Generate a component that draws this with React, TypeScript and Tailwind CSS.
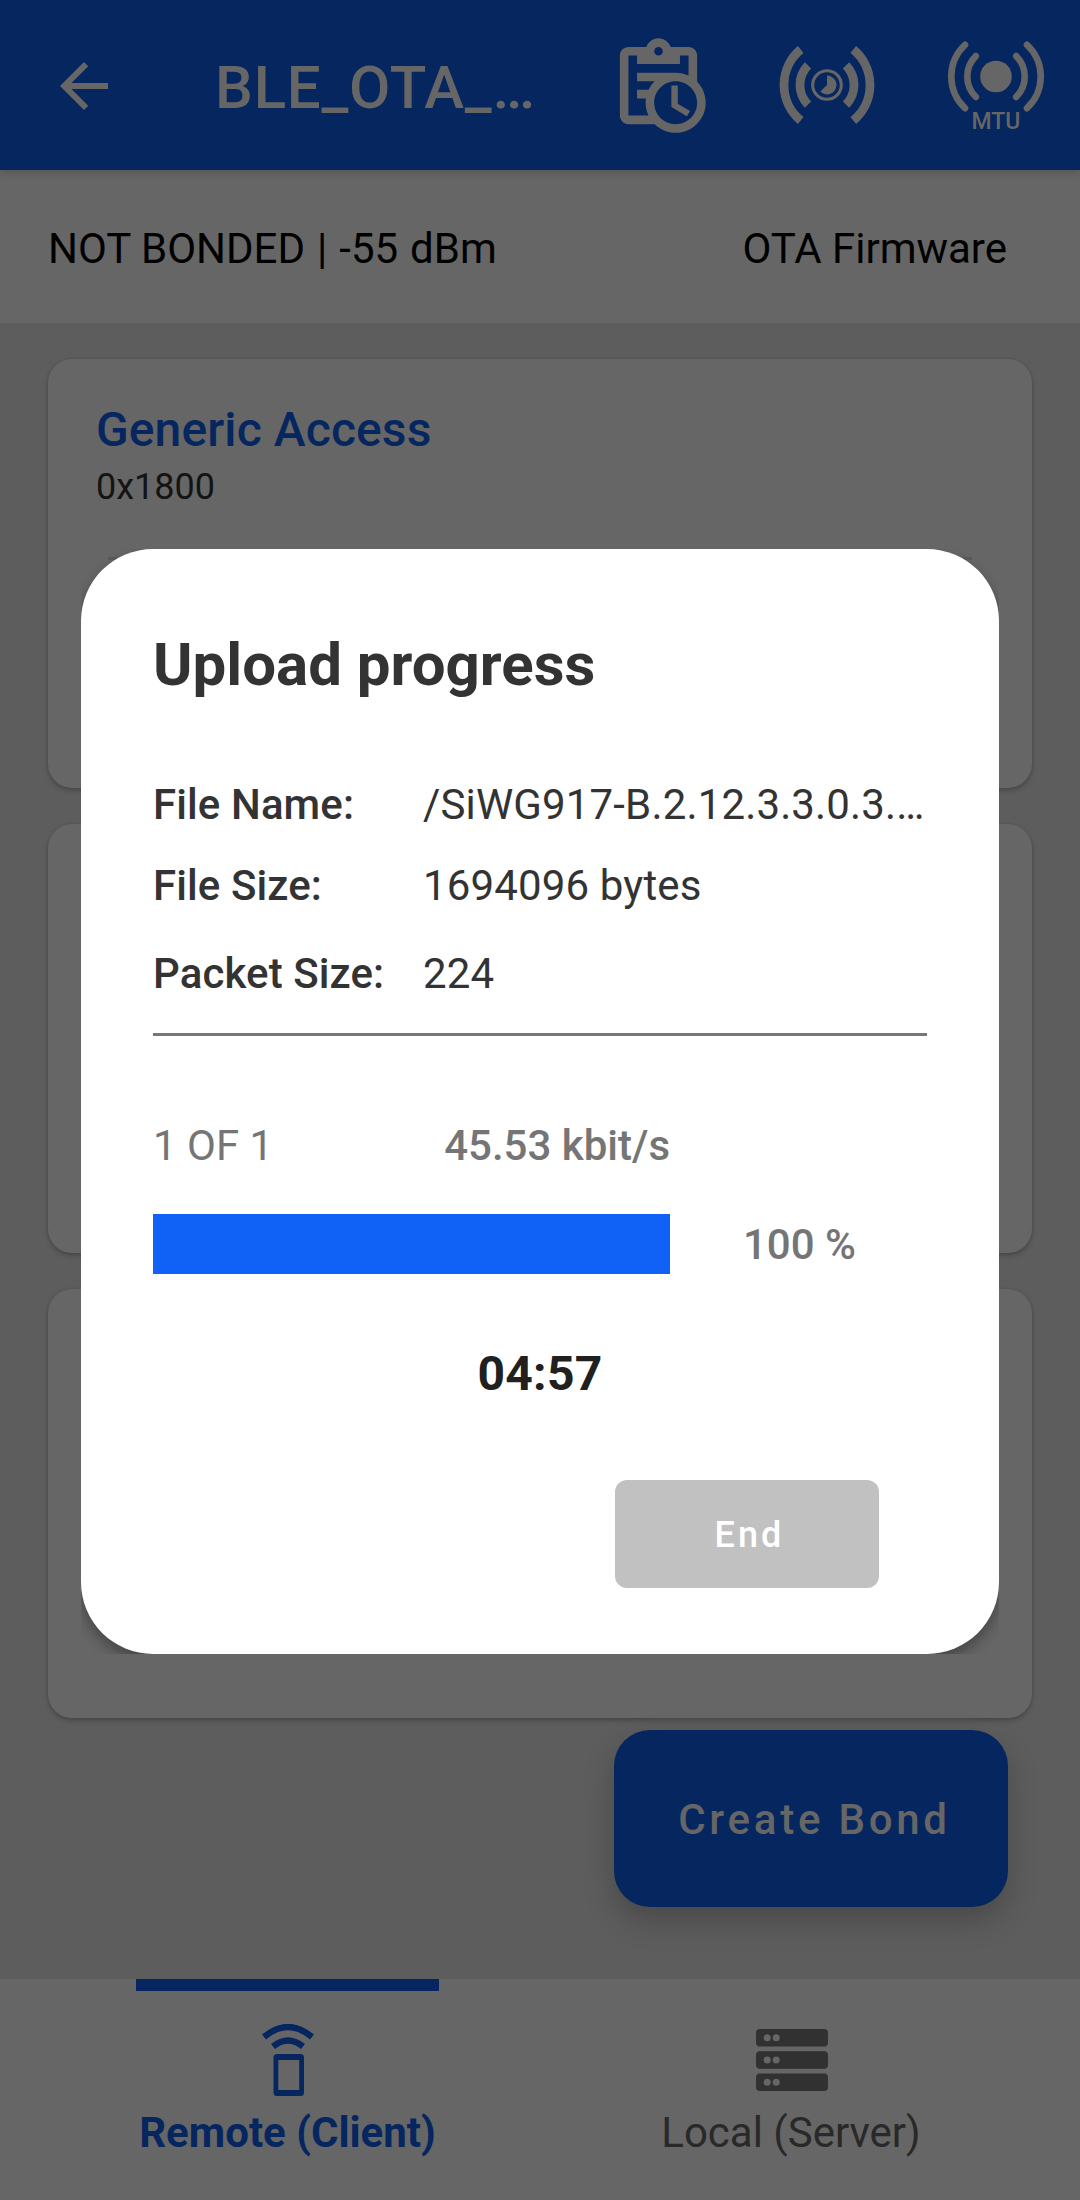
import React from "react";

function ClipboardClock() {
  return (
    <svg width="103" height="103" viewBox="0 0 24 24" fill="currentColor">
      <path d="M21 11.11V5C21 3.9 20.11 3 19 3H14.82C14.4 1.84 13.3 1 12 1S9.6 1.84 9.18 3H5C3.9 3 3 3.9 3 5V19C3 20.11 3.9 21 5 21H11.11C12.37 22.24 14.09 23 16 23C19.87 23 23 19.87 23 16C23 14.09 22.24 12.37 21 11.11M12 3C12.55 3 13 3.45 13 4S12.55 5 12 5 11 4.55 11 4 11.45 3 12 3M5 19V5H7V7H17V5H19V9.68C18.09 9.25 17.08 9 16 9H7V11H11.1C10.5 11.57 10.04 12.25 9.68 13H7V15H9.08C9.03 15.33 9 15.66 9 16C9 17.08 9.25 18.09 9.68 19H5M16 21C13.24 21 11 18.76 11 16S13.24 11 16 11 21 13.24 21 16 18.76 21 16 21M16.5 16.25L19.36 17.94L18.61 19.16L15 17V12H16.5V16.25Z" />
    </svg>
  );
}

function SignalInterval() {
  return (
    <svg width="96" height="80" viewBox="-48 -40 96 80" fill="none" stroke="currentColor">
      <path strokeWidth="8.8" d="M-26.3 -35.5A46.1 46.1 0 0 0 -26.3 35.5M26.3 -35.5A46.1 46.1 0 0 1 26.3 35.5" />
      <path strokeWidth="8.8" d="M-19 -19.6A28 28 0 0 0 -19 19.6M19 -19.6A28 28 0 0 1 19 19.6" />
      <circle r="14.3" strokeWidth="3.1" />
      <path fill="currentColor" stroke="none" d="M0 -9.4A9.4 9.4 0 1 1 -6.6 6.6L0 0Z" />
    </svg>
  );
}

function MtuSignal() {
  return (
    <div className="flex flex-col items-center">
      <svg width="96" height="71" viewBox="-48 -35.5 96 71" fill="none" stroke="currentColor" strokeLinecap="round" strokeWidth="6.6">
        <path d="M-31 -31.7A43.5 43.5 0 0 0 -31 31.7M31 -31.7A43.5 43.5 0 0 1 31 31.7" />
        <path d="M-20.2 -20.4A28.7 28.7 0 0 0 -20.2 20.4M20.2 -20.4A28.7 28.7 0 0 1 20.2 20.4" />
        <circle r="15.8" fill="currentColor" stroke="none" />
      </svg>
      <span className="-mt-1 text-[23px] leading-[27px] font-medium">MTU</span>
    </div>
  );
}

function RemoteIcon() {
  return (
    <svg width="52" height="72" viewBox="0 0 52 72" fill="none" stroke="currentColor">
      <path strokeWidth="6.3" d="M2 13Q26 -7 50 13M11 22.5Q26 10.5 41 22.5" />
      <path
        fill="currentColor"
        stroke="none"
        fillRule="evenodd"
        d="M15 30H38.5Q42 30 42 33.5V68.5Q42 72 38.5 72H15Q11.5 72 11.5 68.5V33.5Q11.5 30 15 30ZM16.3 36V66H37.2V36Z"
      />
    </svg>
  );
}

function ServerIcon() {
  return (
    <svg width="72" height="62" viewBox="0 0 72 62" fill="#313131">
      {[0, 22.2, 44.4].map((y) => (
        <g key={y}>
          <rect y={y} width="72" height="17.6" rx="4" />
          <circle cx="11.2" cy={y + 8.8} r="3.5" fill="#666" />
          <circle cx="20.2" cy={y + 8.8} r="3.5" fill="#666" />
        </g>
      ))}
    </svg>
  );
}

function ServiceCard({ name, uuid }: { name?: string; uuid?: string }) {
  return (
    <section className="h-[429px] shrink-0 rounded-[24px] bg-[#666] px-12 pt-[43px] shadow-[0_3px_5px_rgba(0,0,0,0.2),0_0_3px_rgba(0,0,0,0.12)]">
      <h2 className="h-14 text-[48px] leading-[56px] font-medium tracking-[0.1px] text-[#06265f]">{name}</h2>
      <p className="mt-2 h-[42px] text-[36px] leading-[42px] text-[#141414]">{uuid}</p>
      <div className="mx-3 mt-[49px] h-[3px] bg-[#5b5b5b]" />
    </section>
  );
}

function InfoRow({ label, value, className }: { label: string; value: string; className: string }) {
  return (
    <div className={`flex text-[42px] leading-[50px] text-[#333] ${className}`}>
      <span className="w-[270px] shrink-0 font-medium tracking-[0.1px]">{label}</span>
      <span className="tracking-[0.15px] whitespace-nowrap">{value}</span>
    </div>
  );
}

function UploadDialog() {
  return (
    <div className="absolute top-[549px] left-[81px] h-[1105px] w-[918px] overflow-hidden">
      <div className="h-full rounded-[72px] bg-white px-[72px] pt-[81px] shadow-[0_7px_14px_rgba(0,0,0,0.32)]">
        <h1 className="text-[60px] leading-[70px] font-bold text-[#333]">Upload progress</h1>
        <InfoRow className="mt-[80px]" label="File Name:" value="/SiWG917-B.2.12.3.3.0.3.…" />
        <InfoRow className="mt-[31px]" label="File Size:" value="1694096 bytes" />
        <InfoRow className="mt-[38px]" label="Packet Size:" value="224" />
        <div className="mt-[34px] h-[3px] bg-[#777]" />
        <div className="mt-[85px] flex w-[517px] justify-between text-[42px] leading-[50px] text-[#757575]">
          <span>1 OF 1</span>
          <span className="font-medium">45.53 kbit/s</span>
        </div>
        <div className="mt-[43px] flex h-[60px] items-center">
          <div className="h-full w-[517px] bg-[#1062f6]" />
          <span className="ml-[73px] pt-[2px] text-[42px] leading-[50px] font-medium text-[#757575]">100 %</span>
        </div>
        <div className="mt-[71px] text-center text-[48px] leading-[58px] font-bold tracking-[0.3px] text-[#202020]">04:57</div>
        <button className="mt-[77px] ml-[462px] flex h-[108px] w-[264px] items-center justify-center rounded-[12px] bg-[#c1c1c1] pt-[2px] pl-[5px] text-[36px] font-medium tracking-[3.1px] text-white">
          End
        </button>
      </div>
    </div>
  );
}

export default function App() {
  return (
    <div className="relative flex h-[2200px] w-[1080px] flex-col overflow-hidden bg-[#5d5d5d] font-['Roboto',sans-serif]">
      <header className="relative z-10 flex h-[170px] shrink-0 bg-[#06265f] text-[#666] shadow-[0_3px_8px_rgba(0,0,0,0.16)]">
        <svg className="mt-[50px] ml-12 shrink-0" width="72" height="72" viewBox="0 0 24 24" fill="currentColor">
          <path d="M20 11H7.83l5.59-5.59L12 4l-8 8 8 8 1.41-1.41L7.83 13H20v-2z" />
        </svg>
        <span className="mt-[53px] ml-[95px] w-[392px] shrink-0 text-[60px] leading-[70px] font-medium tracking-[0.75px] whitespace-nowrap">
          BLE_OTA_…
        </span>
        <div className="mt-[34px] w-[172px] shrink-0"><ClipboardClock /></div>
        <div className="mt-[45px] w-[169px] shrink-0"><SignalInterval /></div>
        <div className="mt-[41px]"><MtuSignal /></div>
      </header>
      <div className="flex h-[153px] shrink-0 justify-between bg-[#666] pt-[54px] pr-[73px] pl-12 text-[42px] leading-[50px] text-black">
        <span>
          NOT BONDED<span className="[word-spacing:1.6px]"> | -55 </span>dBm
        </span>
        <span>OTA Firmware</span>
      </div>
      <main className="flex h-[1656px] shrink-0 flex-col gap-9 px-12 pt-9">
        <ServiceCard name="Generic Access" uuid="0x1800" />
        <ServiceCard />
        <ServiceCard />
      </main>
      <nav className="flex h-[221px] shrink-0 bg-[#666] text-[42px] leading-[50px]">
        <div className="flex w-[575px] flex-col items-center text-[#06265f]">
          <div className="h-3 w-[303px] bg-[#06265f]" />
          <div className="mt-[33px] h-[72px]"><RemoteIcon /></div>
          <span className="mt-3 font-bold">Remote (Client)</span>
        </div>
        <div className="flex w-[432px] flex-col items-center pt-[50px] text-[#292929]">
          <div className="h-[62px] pl-[2px]"><ServerIcon /></div>
          <span className="mt-[17px]">Local (Server)</span>
        </div>
      </nav>
      <button className="absolute top-[1730px] left-[614px] flex h-[177px] w-[394px] items-center justify-center rounded-[36px] bg-[#06265f] pt-[2px] pl-[7px] text-[42px] font-medium tracking-[3.75px] text-[#666] shadow-[0_14px_30px_rgba(0,0,0,0.22)]">
        Create Bond
      </button>
      <UploadDialog />
    </div>
  );
}
